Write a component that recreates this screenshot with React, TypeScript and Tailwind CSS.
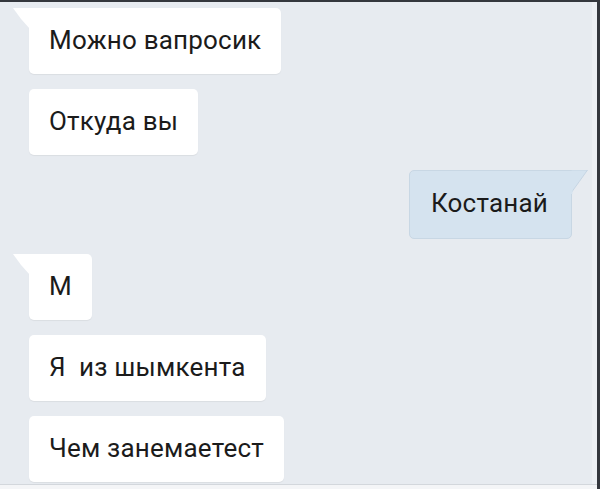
import React from "react";

function LeftBubble({ text, tail = false }: { text: string; tail?: boolean }) {
  return (
    <div className="relative self-start">
      {tail && (
        <svg
          className="absolute left-[-16px] top-0"
          width="17"
          height="22"
          viewBox="0 0 17 22"
        >
          <path d="M0 0 L17 0 L17 21 Q 8 12 0 0 Z" fill="#ffffff" />
        </svg>
      )}
      <div
        className={`bg-white h-[66px] flex items-center pl-[20px] pr-[20px] rounded-[5px] shadow-[0_1px_1px_rgba(0,0,0,0.06)] ${
          tail ? "rounded-tl-none" : ""
        }`}
      >
        <span className="text-[26px] leading-none text-[#1b1b1b] font-['Roboto',sans-serif] tracking-[0.2px] whitespace-pre pb-[3px]">
          {text}
        </span>
      </div>
    </div>
  );
}

export default function App() {
  return (
    <div className="w-[600px] h-[489px] bg-[#e7ebf0] relative overflow-hidden font-['Roboto',sans-serif]">
      <div className="h-[2px] bg-[#34373d]" />
      <div className="absolute right-0 top-0 bottom-0 w-[3px] bg-[#34373d]" />
      <div className="absolute right-[3px] top-[2px] bottom-0 w-[5px] bg-[#edf0f4]" />
      <div className="flex flex-col gap-[15px] pl-[29px] pt-[6px] pr-[28px]">
        <LeftBubble text="Можно вапросик" tail />
        <LeftBubble text="Откуда вы" />
        <div className="relative self-end">
          <svg
            className="absolute right-[-16px] top-0"
            width="17"
            height="24"
            viewBox="0 0 17 24"
          >
            <path
              d="M0 0 L16.5 0 Q 8 12 0 23 Z"
              fill="#d5e3ef"
              stroke="#c6d5e3"
              strokeWidth="1"
            />
            <rect x="0" y="1" width="1.5" height="23" fill="#d5e3ef" />
          </svg>
          <div className="bg-[#d5e3ef] h-[69px] flex items-center pl-[21px] pr-[23px] rounded-[5px] rounded-tr-none border border-[#c8d7e4]">
            <span className="text-[26px] leading-none text-[#1b1b1b] tracking-[0.2px] pb-[3px]">
              Костанай
            </span>
          </div>
        </div>
        <LeftBubble text="М" tail />
        <LeftBubble text="Я  из шымкента" />
        <LeftBubble text="Чем занемаетест" />
      </div>
      <div className="absolute left-0 right-[3px] bottom-0 h-[5px] bg-[#f4f5f7] border-t border-[#d3d7dc]" />
    </div>
  );
}
